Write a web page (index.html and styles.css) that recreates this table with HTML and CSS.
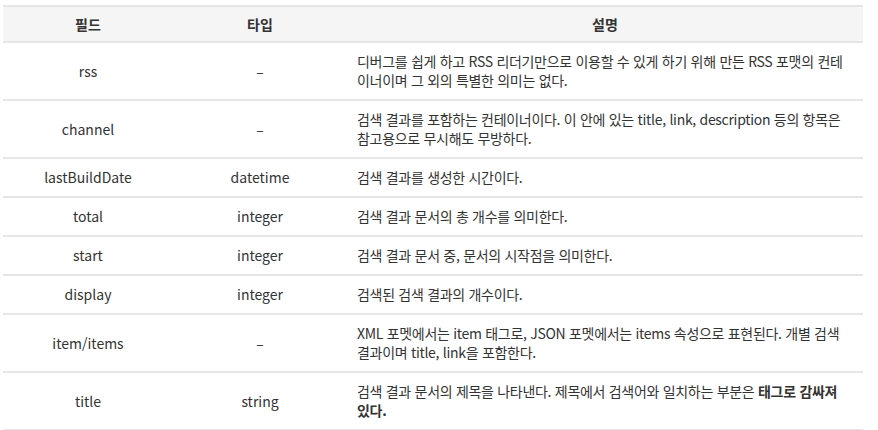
FILE: index.html
```html
<!DOCTYPE html>
<html lang="ko">
<head>
<meta charset="utf-8">
<link rel="stylesheet" href="styles.css">
</head>
<body>
<table class="spec">
  <colgroup>
    <col class="c1"><col class="c2"><col class="c3">
  </colgroup>
  <thead>
    <tr><th>필드</th><th>타입</th><th>설명</th></tr>
  </thead>
  <tbody>
    <tr><td class="mid">rss</td><td class="mid">–</td><td class="desc">디버그를 쉽게 하고 RSS 리더기만으로 이용할 수 있게 하기 위해 만든 RSS 포맷의 컨테이너이며 그 외의 특별한 의미는 없다.</td></tr>
    <tr><td class="mid">channel</td><td class="mid">–</td><td class="desc">검색 결과를 포함하는 컨테이너이다. 이 안에 있는 title, link, description 등의 항목은 참고용으로 무시해도 무방하다.</td></tr>
    <tr><td class="mid">lastBuildDate</td><td class="mid">datetime</td><td class="desc">검색 결과를 생성한 시간이다.</td></tr>
    <tr><td class="mid">total</td><td class="mid">integer</td><td class="desc">검색 결과 문서의 총 개수를 의미한다.</td></tr>
    <tr><td class="mid">start</td><td class="mid">integer</td><td class="desc">검색 결과 문서 중, 문서의 시작점을 의미한다.</td></tr>
    <tr><td class="mid">display</td><td class="mid">integer</td><td class="desc">검색된 검색 결과의 개수이다.</td></tr>
    <tr><td class="mid">item/items</td><td class="mid">–</td><td class="desc">XML 포멧에서는 item 태그로, JSON 포멧에서는 items 속성으로 표현된다. 개별 검색 결과이며 title, link을 포함한다.</td></tr>
    <tr><td class="mid">title</td><td class="mid">string</td><td class="desc">검색 결과 문서의 제목을 나타낸다. 제목에서 검색어와 일치하는 부분은 <b>태그로 감싸져 있다.</b></td></tr>
  </tbody>
</table>
</body>
</html>
```
FILE: styles.css
```css
body {
  margin: 5px 0 0 3px;
  background: #fff;
  font-family: "Noto Sans CJK KR", "Noto Sans", sans-serif;
  font-size: 14px;
  color: #333;
}
.spec {
  border-collapse: collapse;
  table-layout: fixed;
  width: 860px;
}
.c1 { width: 170px; }
.c2 { width: 174px; }
.spec th {
  background: #f5f5f5;
  font-weight: bold;
  height: 34px;
  padding: 0 10px;
  border-top: 2px solid #e6e6e6;
  border-bottom: 2px solid #e6e6e6;
  text-align: center;
  line-height: 20px;
}
.spec td {
  padding: 9px 10px 9px 10px;
  border-bottom: 2px solid #e6e6e6;
  line-height: 19px;
  vertical-align: middle;
  text-align: left;
}
.spec td.mid { text-align: center; }
.spec td.desc { letter-spacing: -0.3px; }
```
